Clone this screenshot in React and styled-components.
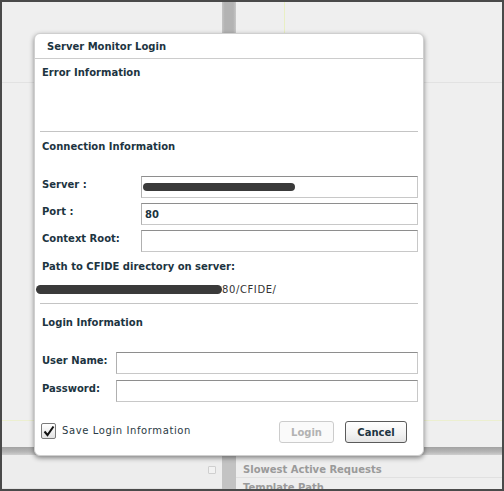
import React from "react";
import styled, { createGlobalStyle } from "styled-components";

const GlobalStyle = createGlobalStyle`
  html, body { margin: 0; padding: 0; background: #efefef; }
  body { font-family: "DejaVu Sans", Verdana, sans-serif; }
  * { box-sizing: border-box; }
`;

const Screen = styled.div`
  position: relative;
  width: 504px;
  height: 491px;
  border: 2px solid #4a4a4a;
  background: #efefef;
  overflow: hidden;
  display: flex;
  flex-direction: column;
`;

const Workspace = styled.div`
  flex: 1;
  display: flex;
`;

const Pane = styled.div`
  display: flex;
  flex-direction: column;
  width: ${(p) => (p.$w ? `${p.$w}px` : "auto")};
  flex: ${(p) => (p.$w ? "none" : "1")};
`;

const PaneTop = styled.div`
  height: 81px;
  border-bottom: 1px solid #e2e2e2;
  display: flex;
`;

const GuideColumn = styled.div`
  width: 49px;
  border-right: 1px solid #e9efc4;
`;

const PaneMid = styled.div`
  flex: 1;
  border-bottom: 1px solid #ecefd0;
`;

const PaneFoot = styled.div`
  height: 26px;
`;

const Splitter = styled.div`
  width: 14px;
  flex: none;
  background: linear-gradient(90deg, #c4c4c4 0, #b3b3b3 20%, #b3b3b3 80%, #c8c8c8 100%);
`;

const Band = styled.div`
  height: 8px;
  background: linear-gradient(180deg, #a2a2a2 0, #b6b6b6 60%, #cfcfcf 100%);
`;

const BottomArea = styled.div`
  height: 34px;
  display: flex;
`;

const BottomLeft = styled.div`
  width: 220px;
  flex: none;
  background: #ededed;
  border-bottom: 1px solid #e2e2e2;
  display: flex;
  justify-content: flex-end;
  padding: 11px 6px 0 0;
`;

const TinySquare = styled.div`
  width: 8px;
  height: 8px;
  border: 1px solid #cfcfcf;
  border-radius: 1px;
  background: #f2f2f2;
`;

const BottomSplitter = styled.div`
  width: 14px;
  flex: none;
  background: #c3c3c3;
`;

const BottomRight = styled.div`
  flex: 1;
  display: flex;
  flex-direction: column;
`;

const BgRow = styled.div`
  height: ${(p) => p.$h}px;
  flex: none;
  padding-left: 7px;
  display: flex;
  align-items: center;
  font-size: 10px;
  font-weight: bold;
  color: #9a9a9a;
  border-bottom: 1px solid #e0e0e0;
  background: #eeeeee;
  white-space: nowrap;
  padding-top: ${(p) => p.$pt || 0}px;
`;

const Dialog = styled.div`
  position: absolute;
  left: 32px;
  top: 31px;
  width: 390px;
  height: 423px;
  background: #ffffff;
  border: 1px solid #cfcfcf;
  border-radius: 6px;
  box-shadow: 0 2px 5px rgba(0, 0, 0, 0.45);
  display: flex;
  flex-direction: column;
  color: #1c3441;
  font-size: 10px;
`;

const Header = styled.div`
  height: 25px;
  flex: none;
  display: flex;
  align-items: center;
  padding-left: 12px;
  border-bottom: 1px solid #cccccc;
  font-weight: bold;
  font-size: 10px;
`;

const Body = styled.div`
  flex: 1;
  display: flex;
  flex-direction: column;
  padding: 0 5px;
`;

const Section = styled.div`
  display: flex;
  flex-direction: column;
  padding: ${(p) => p.$pad};
  border-bottom: ${(p) => (p.$sep ? "1px solid #c4c4c4" : "none")};
  min-height: ${(p) => p.$min || 0}px;
`;

const SectionTitle = styled.div`
  font-weight: bold;
  line-height: 13px;
  padding-left: 2px;
  margin-top: ${(p) => p.$mt || 0}px;
`;

const FormGrid = styled.div`
  display: grid;
  grid-template-columns: ${(p) => p.$label}px 1fr;
  row-gap: ${(p) => p.$gap}px;
  margin-top: ${(p) => p.$mt}px;
`;

const Label = styled.div`
  font-weight: bold;
  line-height: 13px;
  padding: 2px 0 0 2px;
`;

const Field = styled.div`
  height: 22px;
  border: 1px solid #c8c8c8;
  border-top-color: #8e8e8e;
  border-left-color: #b0b0b0;
  background: #fff;
  display: flex;
  align-items: center;
  padding-left: 3px;
  font-weight: bold;
  font-size: 10px;
`;

const Redaction = styled.span`
  display: inline-block;
  width: ${(p) => p.$w}px;
  height: ${(p) => p.$h}px;
  background: #3a3a3a;
  border-radius: ${(p) => p.$h / 2}px;
  margin-left: ${(p) => p.$ml || 0}px;
`;

const PathText = styled.div`
  display: flex;
  align-items: center;
  margin-top: 10px;
  line-height: 13px;
  color: #333;
  font-size: 10px;
  font-weight: normal;
  letter-spacing: 0.6px;
`;

const Footer = styled.div`
  display: flex;
  align-items: center;
  margin-top: 19px;
  padding: 0 11px 0 1px;
  height: 22px;
`;

const CheckLabel = styled.label`
  display: flex;
  align-items: center;
  gap: 6px;
  flex: 1;
  color: #2a3a44;
  font-size: 10px;
  letter-spacing: 0.6px;
  margin-top: -3px;
`;

const CheckBox = styled.span`
  width: 15px;
  height: 16px;
  border: 1px solid #7a7a7a;
  border-radius: 2px;
  background: linear-gradient(180deg, #ffffff, #e2e2e2);
  display: flex;
  align-items: center;
  justify-content: center;
`;

const Button = styled.button`
  height: 22px;
  width: ${(p) => p.$w}px;
  margin-left: ${(p) => p.$ml || 0}px;
  font-family: inherit;
  font-size: 10px;
  font-weight: bold;
  border-radius: 3px;
  padding: 0;
  border: 1px solid ${(p) => (p.disabled ? "#cccccc" : "#5a5a5a")};
  color: ${(p) => (p.disabled ? "#b2b2b2" : "#1c3441")};
  background: ${(p) =>
    p.disabled ? "#fafafa" : "linear-gradient(180deg, #ffffff 0, #f2f2f2 60%, #e4e4e4 100%)"};
`;

export default function App() {
  return (
    <>
      <GlobalStyle />
      <Screen>
        <Workspace>
          <Pane $w={220}>
            <PaneTop />
            <PaneMid />
            <PaneFoot />
          </Pane>
          <Splitter />
          <Pane>
            <PaneTop>
              <GuideColumn />
            </PaneTop>
            <PaneMid />
            <PaneFoot />
          </Pane>
        </Workspace>
        <Band />
        <BottomArea>
          <BottomLeft>
            <TinySquare />
          </BottomLeft>
          <BottomSplitter />
          <BottomRight>
            <BgRow $h={23} $pt={7}>Slowest Active Requests</BgRow>
            <BgRow $h={14} $pt={6}>Template Path</BgRow>
          </BottomRight>
        </BottomArea>

        <Dialog>
          <Header>Server Monitor Login</Header>
          <Body>
            <Section $pad="7px 0 0 0" $sep $min={73}>
              <SectionTitle>Error Information</SectionTitle>
            </Section>
            <Section $pad="8px 0 7px 0" $sep>
              <SectionTitle>Connection Information</SectionTitle>
              <FormGrid $label={101} $gap={5} $mt={23}>
                <Label>Server :</Label>
                <Field>
                  <Redaction $w={152} $h={8} $ml={-2} />
                </Field>
                <Label>Port :</Label>
                <Field>80</Field>
                <Label>Context Root:</Label>
                <Field />
              </FormGrid>
              <SectionTitle $mt={8}>Path to CFIDE directory on server:</SectionTitle>
              <PathText>
                <Redaction $w={186} $h={9} $ml={-4} />
                <span>80/CFIDE/</span>
              </PathText>
            </Section>
            <Section $pad="12px 0 0 0">
              <SectionTitle>Login Information</SectionTitle>
              <FormGrid $label={76} $gap={6} $mt={23}>
                <Label>User Name:</Label>
                <Field />
                <Label>Password:</Label>
                <Field />
              </FormGrid>
              <Footer>
                <CheckLabel>
                  <CheckBox>
                    <svg width="12" height="12" viewBox="0 0 12 12">
                      <path d="M1.5 6.5 L4.5 10 L10.5 1.5" fill="none" stroke="#111" strokeWidth="2" />
                    </svg>
                  </CheckBox>
                  Save Login Information
                </CheckLabel>
                <Button disabled $w={55}>Login</Button>
                <Button $w={62} $ml={11}>Cancel</Button>
              </Footer>
            </Section>
          </Body>
        </Dialog>
      </Screen>
    </>
  );
}
